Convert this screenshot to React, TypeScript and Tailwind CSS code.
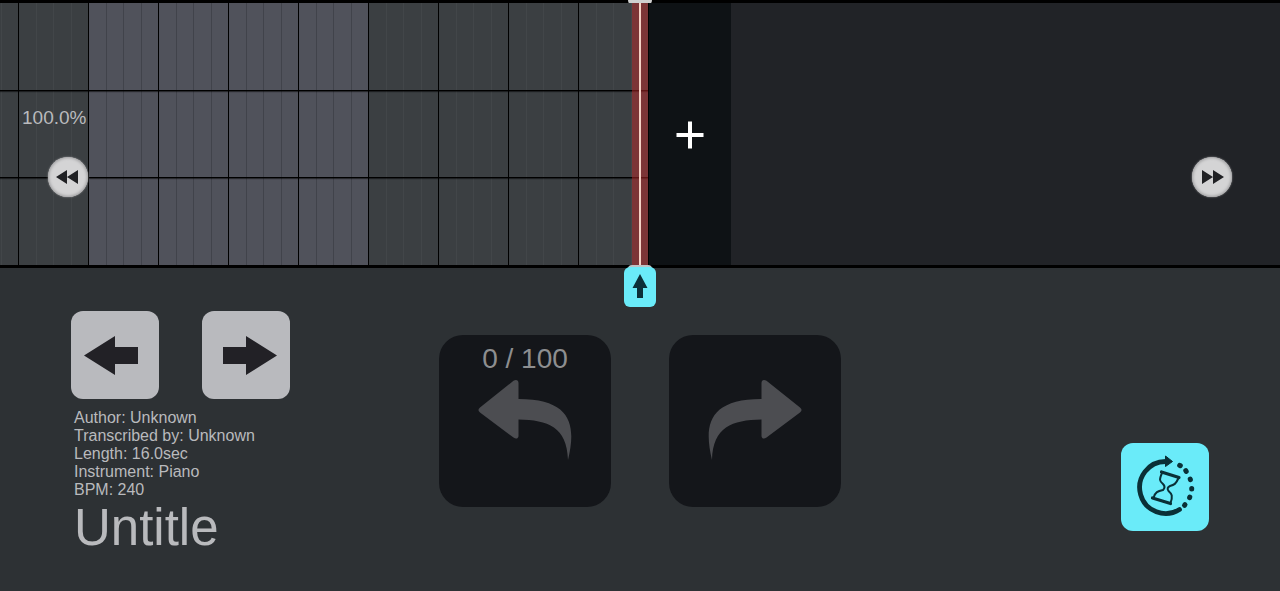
import { useState } from 'react';

interface Bar {
  id: number;
  highlighted: boolean;
}

const bars: Bar[] = Array.from({ length: 10 }, (_, i) => ({
  id: i,
  highlighted: i >= 2 && i <= 5,
}));

const songInfo = [
  { label: 'Author', value: 'Unknown' },
  { label: 'Transcribed by', value: 'Unknown' },
  { label: 'Length', value: '16.0sec' },
  { label: 'Instrument', value: 'Piano' },
  { label: 'BPM', value: '240' },
];

const TimelineBar = ({ highlighted }: { highlighted: boolean }) => (
  <div
    className={`flex w-[70px] shrink-0 border-r border-black shadow-[1px_0_1px_#00000080] ${highlighted ? 'bg-[#50525b]' : 'bg-[#3b3f42]'}`}
  >
    {[0, 1, 2, 3].map((beat) => (
      <div
        key={beat}
        className={`flex-1 ${beat < 3 ? 'border-r' : ''} ${highlighted ? 'border-[#41434b]' : 'border-[#424649]'}`}
      />
    ))}
  </div>
);

const SeekButton = ({ forward = false }: { forward?: boolean }) => (
  <button
    aria-label={forward ? 'Fast forward' : 'Rewind'}
    className="flex size-10 items-center justify-center rounded-full bg-[#d4d4d5] shadow-[0_0_2px_#a0a0a2,inset_0_0_3px_1px_#a0a0a2]"
  >
    <svg className={`h-4 w-6 ${forward ? '' : 'rotate-180'}`} viewBox="0 0 24 16" fill="#202124">
      <path d="M2 1L13 8L2 15zM13 1L24 8L13 15z" />
    </svg>
  </button>
);

const StepButton = ({ forward = false }: { forward?: boolean }) => (
  <button
    aria-label={forward ? 'Next' : 'Previous'}
    className="flex size-[88px] items-center justify-center rounded-xl bg-[#b9babe]"
  >
    <svg className={`h-10 w-[62px] ${forward ? '' : '-scale-x-100'}`} viewBox="0 0 62 40" fill="#222126">
      <path d="M8 12H31V1L62 20.500L31 40V29H8z" />
    </svg>
  </button>
);

const HistoryButton = ({ redo = false, count }: { redo?: boolean; count?: string }) => (
  <button
    aria-label={redo ? 'Redo' : 'Undo'}
    className="flex size-[172px] flex-col items-center rounded-3xl bg-[#14161a] pt-2 text-[28px] leading-8 text-[#8d8e90]"
  >
    <span className="h-8">{count}</span>
    <svg className={`mt-1 h-[84px] w-[94px] ${redo ? '' : '-scale-x-100'}`} viewBox="0 0 94 84" fill="#4c4d51">
      <path d="M53.500 4C53.500 1 56 0 58.500 1.800L92 28.500C94 30.500 94 31.500 92 33.500L58.500 58.500C56 60.500 53.500 59.500 53.500 57V40.500C24 41 5 48 4 81C-4 48 -1 20 53.500 20z" />
    </svg>
  </button>
);

const App = () => {
  const [zoom] = useState(100);

  return (
    <main className="flex min-h-screen flex-col overflow-hidden bg-[#2d3134] font-['Liberation_Sans',sans-serif] text-[#b9babd]">
      {/* Timeline */}
      <section className="relative flex h-[268px] border-y-3 border-black bg-[#212327]">
        <div className="relative flex w-[calc(50%+9px)] justify-end overflow-hidden">
          {bars.map((bar) => (
            <TimelineBar key={bar.id} highlighted={bar.highlighted} />
          ))}
          <div className="absolute inset-0 flex flex-col">
            <div className="h-[88px] border-b border-black shadow-[0_1px_1px_#00000080]" />
            <div className="h-[87px] border-b border-black shadow-[0_1px_1px_#00000080]" />
          </div>
        </div>
        <button aria-label="Add bar" className="flex w-[82px] justify-center bg-[#0e1215] pt-[118px]">
          <svg className="size-7" viewBox="0 0 28 28" stroke="#fff" strokeWidth="4">
            <path d="M14 0.500V27.500M0.500 14H27.500" />
          </svg>
        </button>

        <span className="absolute top-[103px] left-[22px] text-[19px] leading-6">{zoom.toFixed(1)}%</span>
        <div className="absolute top-[154px] left-12">
          <SeekButton />
        </div>
        <div className="absolute top-[154px] right-12">
          <SeekButton forward />
        </div>

        {/* Playhead */}
        <div className="absolute inset-y-0 left-1/2 flex w-4 -translate-x-1/2 justify-center bg-[#bd292a]/50">
          <div className="w-[2px] bg-[#f4d0c4]" />
        </div>
        <div className="absolute -top-[3px] left-1/2 h-[6px] w-6 -translate-x-1/2 rounded-b-md bg-[#cfcfcf] [clip-path:inset(0_0_3px_0)]" />
        <div className="absolute top-[262px] left-1/2 h-2 w-6 -translate-x-1/2 rounded-t-sm bg-[#bcc4c6]" />
        <button
          aria-label="Move playhead"
          className="absolute top-[264px] left-1/2 flex h-10 w-8 -translate-x-1/2 items-center justify-center rounded-md bg-[#6aebf9] pb-[2px]"
        >
          <svg className="h-6 w-4" viewBox="0 0 16 24" fill="#0b2f38">
            <path d="M8 0L15.500 14H11V24H5V14H.5z" />
          </svg>
        </button>
      </section>

      {/* Controls */}
      <section className="grid flex-1 grid-cols-[1fr_auto_1fr] px-[71px]">
        <div className="pt-[43px]">
          <div className="flex gap-[43px]">
            <StepButton />
            <StepButton forward />
          </div>
          <div className="mt-[10px] pl-[3px]">
            <ul className="text-base leading-[18px]">
              {songInfo.map((item) => (
                <li key={item.label}>
                  {item.label}: {item.value}
                </li>
              ))}
            </ul>
            <h1 className="text-[51px] leading-[58px]">Untitle</h1>
          </div>
        </div>

        <div className="flex gap-[58px] pt-[67px]">
          <HistoryButton count="0 / 100" />
          <HistoryButton redo />
        </div>

        <div className="flex justify-end pt-[175px]">
          <button
            aria-label="Playback history"
            className="flex size-[88px] items-center justify-center rounded-xl bg-[#6aebf9]"
          >
            <svg className="size-16" viewBox="0 0 64 64" fill="none" stroke="#0a3037">
              <path d="M33 6.500A26 26 0 1 0 46.500 54.500" strokeWidth="4.800" strokeLinecap="round" />
              <path d="M32.500 1L39.500 6.500L32.500 11.500z" fill="#0a3037" strokeWidth="1" />
              <path
                d="M46.700 10.300L47.300 10.700M52.800 15.700L53.200 16.300M57.200 24L57.400 24.600M58.700 33.400V34M56.800 42L56.600 42.600M52 49.700L51.500 50.300"
                strokeWidth="5"
                strokeLinecap="round"
              />
              <path d="M28.500 17L46 22.500M19.500 43L37.500 48.500" strokeWidth="3.200" strokeLinecap="round" />
              <path
                d="M29 18C26 25 26.500 26 30 29C32 31 32 33 30 35C25 36 22 37 20.500 43M45.500 23C43 29 41 30 37 31C34.500 32 34 34 35.500 36C39 39 40 41 37.500 48"
                strokeWidth="2"
              />
            </svg>
          </button>
        </div>
      </section>
    </main>
  );
};

export default App;
